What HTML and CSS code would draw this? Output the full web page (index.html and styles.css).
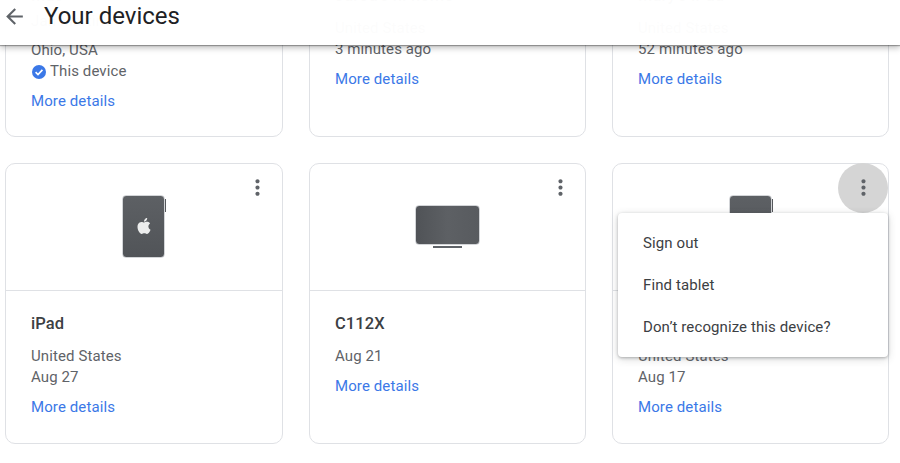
FILE: index.html
```html
<!DOCTYPE html>
<html lang="en">
<head>
<meta charset="utf-8">
<title>Your devices</title>
<link rel="stylesheet" href="styles.css">
</head>
<body>
<header class="topbar">
  <svg class="back" viewBox="0 0 24 24"><path d="M20 11H7.83l5.59-5.59L12 4l-8 8 8 8 1.41-1.41L7.83 13H20v-2z"/></svg>
  <h1 class="topbar-title">Your devices</h1>
</header>
<main class="grid">
  <article class="card">
    <div class="thumb thumb-short"></div>
    <div class="body">
      <h2 class="name">Mac</h2>
      <p class="line line-owner">Jan Martin's</p>
      <p class="line">Ohio, USA</p>
      <p class="line this-device">
        <svg class="check" viewBox="0 0 14 14"><circle cx="7" cy="7" r="7" fill="#3b78e7"/><path d="M3.6 7.2l2.4 2.3 4.4-4.6" fill="none" stroke="#fff" stroke-width="1.7"/></svg>
        This device
      </p>
      <a class="more" href="#">More details</a>
    </div>
  </article>
  <article class="card">
    <div class="thumb thumb-short"></div>
    <div class="body">
      <h2 class="name">Jarod's n. home</h2>
      <p class="line line-first">United States</p>
      <p class="line">3 minutes ago</p>
      <a class="more" href="#">More details</a>
    </div>
  </article>
  <article class="card">
    <div class="thumb thumb-short"></div>
    <div class="body">
      <h2 class="name">Mary's iPad</h2>
      <p class="line line-first">United States</p>
      <p class="line">52 minutes ago</p>
      <a class="more" href="#">More details</a>
    </div>
  </article>

  <article class="card">
    <button class="kebab" type="button" aria-label="More"><svg viewBox="0 0 24 24"><path d="M12 8c1.1 0 2-.9 2-2s-.9-2-2-2-2 .9-2 2 .9 2 2 2zm0 2c-1.1 0-2 .9-2 2s.9 2 2 2 2-.9 2-2-.9-2-2-2zm0 6c-1.1 0-2 .9-2 2s.9 2 2 2 2-.9 2-2-.9-2-2-2z"/></svg></button>
    <div class="thumb">
      <div class="tablet">
        <svg class="apple" viewBox="0 0 24 24"><path d="M12.152 6.896c-.948 0-2.415-1.078-3.96-1.04-2.04.027-3.91 1.183-4.961 3.014-2.117 3.675-.546 9.103 1.519 12.09 1.013 1.454 2.208 3.09 3.792 3.039 1.52-.065 2.09-.987 3.935-.987 1.831 0 2.35.987 3.96.948 1.637-.026 2.676-1.48 3.676-2.948 1.156-1.688 1.636-3.325 1.662-3.415-.039-.013-3.182-1.221-3.22-4.857-.026-3.04 2.48-4.494 2.597-4.559-1.429-2.09-3.623-2.324-4.39-2.376-2-.156-3.675 1.09-4.61 1.09zM15.53 3.83c.843-1.012 1.4-2.427 1.245-3.83-1.207.052-2.662.805-3.532 1.818-.78.896-1.454 2.338-1.273 3.714 1.338.104 2.715-.688 3.559-1.701"/></svg>
      </div>
    </div>
    <div class="body">
      <h2 class="name">iPad</h2>
      <p class="line line-first">United States</p>
      <p class="line">Aug 27</p>
      <a class="more" href="#">More details</a>
    </div>
  </article>
  <article class="card">
    <button class="kebab" type="button" aria-label="More"><svg viewBox="0 0 24 24"><path d="M12 8c1.1 0 2-.9 2-2s-.9-2-2-2-2 .9-2 2 .9 2 2 2zm0 2c-1.1 0-2 .9-2 2s.9 2 2 2 2-.9 2-2-.9-2-2-2zm0 6c-1.1 0-2 .9-2 2s.9 2 2 2 2-.9 2-2-.9-2-2-2z"/></svg></button>
    <div class="thumb">
      <div class="tv-wrap">
        <div class="tv"></div>
        <div class="tv-stand"></div>
      </div>
    </div>
    <div class="body">
      <h2 class="name">C112X</h2>
      <p class="line line-first">Aug 21</p>
      <a class="more" href="#">More details</a>
    </div>
  </article>
  <article class="card">
    <button class="kebab kebab-active" type="button" aria-label="More"><svg viewBox="0 0 24 24"><path d="M12 8c1.1 0 2-.9 2-2s-.9-2-2-2-2 .9-2 2 .9 2 2 2zm0 2c-1.1 0-2 .9-2 2s.9 2 2 2 2-.9 2-2-.9-2-2-2zm0 6c-1.1 0-2 .9-2 2s.9 2 2 2 2-.9 2-2-.9-2-2-2z"/></svg></button>
    <div class="thumb">
      <div class="tablet"></div>
    </div>
    <div class="body">
      <h2 class="name">Tablet</h2>
      <p class="line line-first">United States</p>
      <p class="line">Aug 17</p>
      <a class="more" href="#">More details</a>
    </div>
    <ul class="menu">
      <li class="menu-item">Sign out</li>
      <li class="menu-item">Find tablet</li>
      <li class="menu-item">Don’t recognize this device?</li>
    </ul>
  </article>
</main>
</body>
</html>
```
FILE: styles.css
```css
* { box-sizing: border-box; }
html, body { margin: 0; height: 463px; overflow: hidden; background: #fff; }
body { font-family: Roboto, "Liberation Sans", sans-serif; color: #5f6368; }

.topbar {
  position: absolute; top: 0; left: 0; right: 0; height: 45px; z-index: 5;
  display: flex; align-items: flex-start; padding: 4px 0 0 2px;
  background: rgba(255,255,255,.98);
  box-shadow: 0 1px 1px rgba(0,0,0,.3), 0 3px 6px rgba(0,0,0,.25);
}
.back { width: 25px; height: 25px; fill: #5f6368; flex: none; }
.topbar-title { margin: 0 0 0 17px; font-size: 24px; font-weight: 400; line-height: 25px; color: #202124; }

.grid {
  display: grid; grid-template-columns: 278px 277px 277px; grid-auto-rows: 281px;
  gap: 26px; margin: -144px 0 0 5px;
}
.card { position: relative; border: 1px solid #dfe1e5; border-radius: 10px; background: #fff; }
.thumb {
  height: 127px; border-bottom: 1px solid #dfe1e5;
  display: flex; align-items: center; justify-content: center;
}
.thumb-short { height: 106px; }
.body { padding: 21px 25px 0; }
.name { margin: 0; font-size: 16.5px; font-weight: 500; line-height: 24px; color: #3c4043; letter-spacing: .1px; }
.line { margin: 0; font-size: 15px; line-height: 21px; letter-spacing: .1px; }
.line-first { margin-top: 10px; }
.line-owner { margin: 3px 0 8px; }
.this-device { display: flex; align-items: center; gap: 4px; }
.check { width: 14px; height: 14px; margin-left: 1px; flex: none; }
.more { display: block; margin-top: 9px; font-size: 15px; line-height: 21px; letter-spacing: .1px; color: #3b78e7; text-decoration: none; }

.tablet {
  position: relative; width: 43px; height: 63px; margin: -1px 0 0 -1px; border-radius: 4px;
  background: linear-gradient(#5d6064, #515458);
  border: 1px solid #d3d5d8;
  display: flex; align-items: center; justify-content: center;
}
.tablet::after {
  content: ""; position: absolute; right: -2px; top: 3px; width: 1px; height: 13px; background: #55585c;
}
.apple { width: 16px; height: 16px; margin-bottom: 2px; fill: #eceded; }
.tv-wrap { display: flex; flex-direction: column; align-items: center; gap: 1px; margin-top: -1px; }
.tv {
  width: 65px; height: 40px; border-radius: 4px; border: 1px solid #d3d5d8;
  background: linear-gradient(90deg, #505357, #5d6064 50%, #585b5f);
}
.tv-stand { width: 29px; height: 2px; background: #5f6368; }

.kebab {
  position: absolute; top: -1px; right: 0; width: 50px; height: 50px; padding: 0 0 2px;
  border: 0; border-radius: 50%; background: transparent;
  display: flex; align-items: center; justify-content: center;
}
.kebab svg { width: 25px; height: 25px; fill: #5f6368; }
.kebab-active { background: #d5d5d5; }

.menu {
  position: absolute; left: 5px; top: 49px; width: 270px; height: 144px; z-index: 2;
  margin: 0; padding: 20px 0 0; list-style: none;
  background: #fff; border-radius: 4px;
  box-shadow: 0 1px 3px rgba(60,64,67,.35), 0 2px 8px rgba(60,64,67,.2);
}
.menu-item { height: 42px; padding-left: 25px; font-size: 15px; line-height: 21px; letter-spacing: .1px; color: #3c4043; }
```
